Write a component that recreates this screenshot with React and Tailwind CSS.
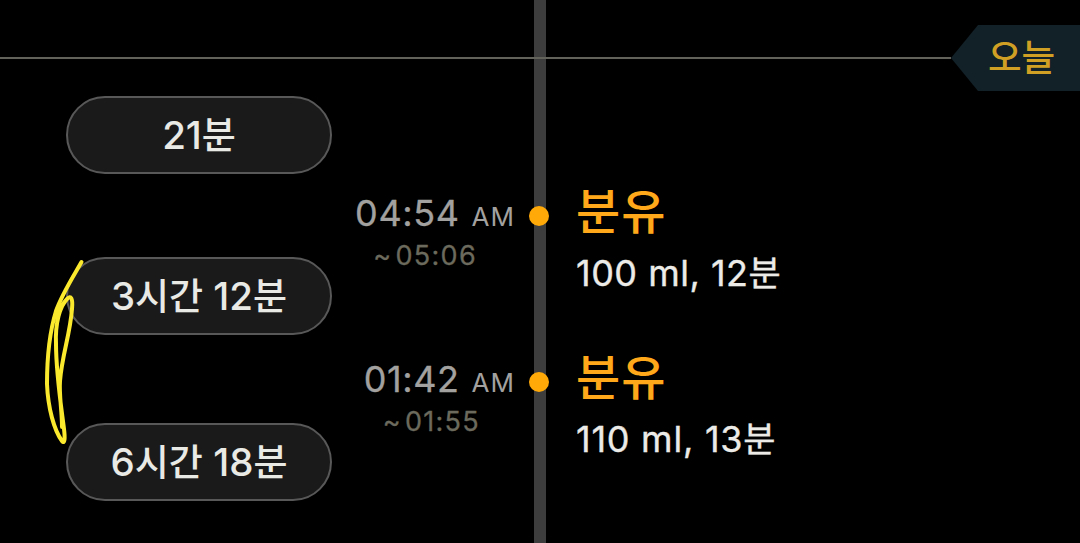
const LATIN = "font-['Inter','Noto_Sans_CJK_KR',sans-serif]";
const KOREAN = "font-['Noto_Sans_CJK_KR',sans-serif]";

function Ko({ children, className = "" }) {
  return <span className={`${KOREAN} ${className}`}>{children}</span>;
}

function Pill({ children, className = "" }) {
  return (
    <div
      className={`flex h-[78px] w-[266px] shrink-0 items-center justify-center rounded-full border-2 border-[#585858] bg-[#1a1a1a] text-[38.5px] leading-[44px] font-medium whitespace-pre text-[#e9e9e5] ${className}`}
    >
      {children}
    </div>
  );
}

function PillKo({ children }) {
  return <Ko className="-mt-[4px] text-[37px] font-medium">{children}</Ko>;
}

function Time({ start, end, endPad, className = "" }) {
  return (
    <div className={`flex flex-col items-end ${className}`}>
      <div className="flex h-11 items-baseline pr-[19px] leading-[44px] text-[#a3a19f]">
        <span className="text-[36px] tracking-[0.6px] [-webkit-text-stroke:0.3px]">{start}</span>
        <span className="ml-3 text-[26px] tracking-[1px]">AM</span>
      </div>
      <div className={`flex h-9 text-[27px] leading-9 tracking-[1.3px] text-[#6b6a5c] [-webkit-text-stroke:0.3px] ${endPad}`}>
        <span className="mr-[3px]">~</span>
        <span>{end}</span>
      </div>
    </div>
  );
}

function Entry({ detail, minutes, tracking, className = "" }) {
  return (
    <div className={`flex flex-col ${className}`}>
      <Ko className="h-[60px] text-[48px] leading-[60px] font-medium tracking-[1px] text-[#ffa91a]">분유</Ko>
      <div className={`mt-[13px] flex h-[44px] items-center text-[36px] leading-[44px] whitespace-pre text-[#ecebe8] [-webkit-text-stroke:0.35px] ${tracking}`}>
        <span>{detail}</span>
        <span>{minutes}</span>
        <Ko className="-mt-[5px] text-[35px]">분</Ko>
      </div>
    </div>
  );
}

function Dot({ className = "" }) {
  return <span className={`size-[20px] shrink-0 rounded-full bg-[#ffa908] ${className}`} />;
}

export default function App() {
  return (
    <main className={`relative flex h-[543px] w-[1080px] overflow-hidden bg-black ${LATIN}`}>
      <section className="relative flex w-[332px] shrink-0 flex-col pt-24 pl-[66px]">
        <Pill>
          <span>21</span>
          <PillKo>분</PillKo>
        </Pill>
        <Pill className="mt-[83px]">
          <span>3</span>
          <PillKo>시간</PillKo>
          <span> 12</span>
          <PillKo>분</PillKo>
        </Pill>
        <Pill className="mt-[88px]">
          <span>6</span>
          <PillKo>시간</PillKo>
          <span> 18</span>
          <PillKo>분</PillKo>
        </Pill>
        <svg
          className="absolute top-[250px] left-[40px]"
          width="60"
          height="200"
          viewBox="40 250 60 200"
          fill="none"
          stroke="#fbe92e"
          strokeWidth="4"
          strokeLinecap="round"
          strokeLinejoin="round"
        >
          <path d="M81.500 262 C73 277 62 294 56 311 C49 334 47 361 47 384 C48 408 54 430 62 441 C65 445 65 437 64 429 C61 405 56 373 56 344 C55 323 60 306 67 299 C71 295 73 298 72 309 C70 335 62 355 60 381 C59 395 62 411 62 427" />
        </svg>
      </section>

      <section className="flex w-[202px] shrink-0 flex-col pt-[191px]">
        <Time start="04:54" end="05:06" endPad="mt-[3px] pr-[57px]" />
        <Time start="01:42" end="01:55" endPad="mt-[3px] pr-[54px]" className="mt-[83px]" />
      </section>

      <div className="flex w-3 shrink-0 flex-col items-center bg-[#3d3d3d] pt-[206px]">
        <Dot className="-ml-[2px]" />
        <Dot className="mt-[146px] -ml-[2px]" />
      </div>

      <section className="flex flex-1 flex-col pt-[178px] pl-[30px]">
        <Entry detail="100 ml, " minutes="12" tracking="tracking-[0.5px]" />
        <Entry detail="110 ml, " minutes="13" tracking="tracking-[0.75px]" className="mt-[49px]" />
      </section>

      <header className="absolute inset-x-0 top-[25px] flex h-[66px] items-center">
        <div className="h-[2px] flex-1 bg-[#62615a]" />
        <div className="flex h-full w-[129px] items-center bg-[#122027] pb-[3px] pl-[37px] [clip-path:polygon(0_50%,27px_0,100%_0,100%_100%,27px_100%)]">
          <Ko className="text-[36.5px] leading-none font-medium text-[#d0a025]">오늘</Ko>
        </div>
      </header>
    </main>
  );
}
